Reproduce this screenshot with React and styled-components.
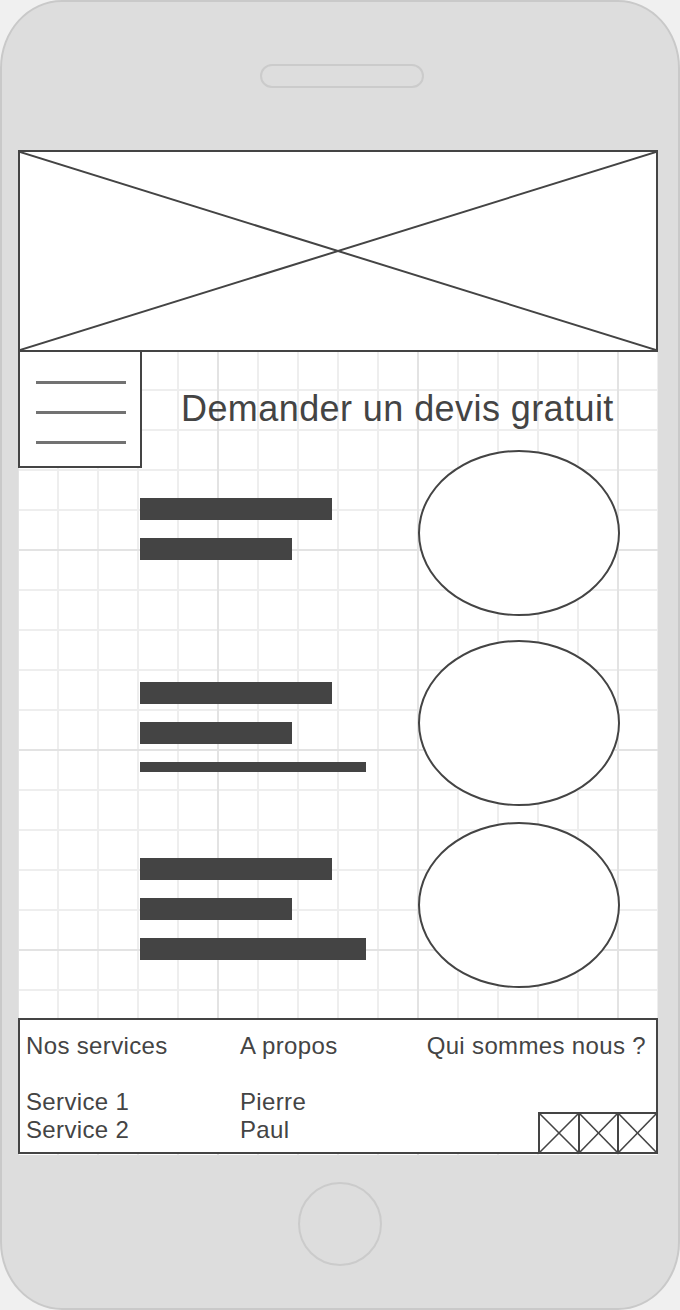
import React from 'react';
import styled, { createGlobalStyle } from 'styled-components';

const Global = createGlobalStyle`
  html, body { margin: 0; padding: 0; background: #f0f0f0; }
  body { font-family: "Liberation Sans", Arial, sans-serif; }
  * { box-sizing: border-box; }
`;

const Phone = styled.div`
  width: 680px;
  height: 1310px;
  border: 2px solid #c9c9c9;
  border-radius: 62px / 68px;
  background: #dddddd;
  display: flex;
  flex-direction: column;
  align-items: flex-start;
`;

const Speaker = styled.div`
  margin: 62px 0 0 258px;
  width: 164px;
  height: 24px;
  border: 2px solid #cbcbcb;
  border-radius: 12px;
`;

const Screen = styled.div`
  margin: 62px 0 0 16px;
  width: 640px;
  height: 1005px;
  background-color: #fff;
  background-image:
    linear-gradient(90deg, #e3e3e3 2px, transparent 2px),
    linear-gradient(#e3e3e3 2px, transparent 2px),
    linear-gradient(90deg, #eeeeee 2px, transparent 2px),
    linear-gradient(#eeeeee 2px, transparent 2px);
  background-size: 200px 200px, 200px 200px, 40px 40px, 40px 40px;
  background-position: -1px -1px;
  display: flex;
  flex-direction: column;
`;

const Hero = styled.div`
  height: 202px;
  border: 2px solid #444;
  background: #fff;
  svg { display: block; width: 100%; height: 100%; }
`;

const TopRow = styled.div`
  display: flex;
  align-items: center;
  height: 118px;
  margin-top: -2px;
  margin-bottom: -18px;
`;

const MenuBox = styled.div`
  width: 124px;
  height: 118px;
  border: 2px solid #444;
  background: #fff;
  display: flex;
  flex-direction: column;
  padding: 29px 0 0 16px;
  gap: 27px;
`;

const MenuLine = styled.div`
  width: 90px;
  height: 3px;
  background: #727272;
`;

const Title = styled.h1`
  margin: 0 0 0 39px;
  font-size: 36px;
  font-weight: 400;
  letter-spacing: 0.42px;
  color: #444;
  line-height: 1.15;
  white-space: nowrap;
`;

const Row = styled.div`
  display: flex;
  justify-content: space-between;
  align-items: flex-start;
  height: 166px;
  margin-top: ${p => p.$gap}px;
  padding: 0 38px 0 122px;
`;

const Bars = styled.div`
  display: flex;
  flex-direction: column;
  gap: 18px;
  padding-top: ${p => p.$offset}px;
`;

const Bar = styled.div`
  width: ${p => p.$w}px;
  height: ${p => p.$h || 22}px;
  background: #444;
`;

const Ellipse = styled.div`
  width: 202px;
  height: 166px;
  border: 2px solid #444;
  border-radius: 50%;
  background: #fff;
`;

const Footer = styled.footer`
  margin-top: 30px;
  height: 136px;
  border: 2px solid #444;
  background: #fff;
  display: grid;
  grid-template-columns: 214px 1fr auto;
  padding: 12px 0 0 6px;
  font-size: 24px;
  letter-spacing: 0.35px;
  line-height: 28px;
  color: #444;
`;

const Col = styled.div`
  display: flex;
  flex-direction: column;
`;

const Item = styled.div`
  white-space: nowrap;
  min-height: 28px;
`;

const RightCol = styled.div`
  display: flex;
  flex-direction: column;
  align-items: flex-end;
  justify-content: space-between;
  margin: 0 -2px -2px 0;
`;

const RightText = styled.div`
  padding-right: 12px;
  white-space: nowrap;
`;

const Icons = styled.svg`
  display: block;
`;

const HomeButton = styled.div`
  margin: 27px 0 0 296px;
  width: 84px;
  height: 84px;
  border: 2px solid #cbcbcb;
  border-radius: 50%;
`;

function IconStrip() {
  const xs = [1, 41, 80, 119];
  return (
    <Icons width="120" height="42" viewBox="0 0 120 42">
      <rect x="1" y="1" width="118" height="40" fill="#fff" stroke="#444" strokeWidth="2" />
      <line x1="41" y1="0" x2="41" y2="42" stroke="#444" strokeWidth="2" />
      <line x1="80" y1="0" x2="80" y2="42" stroke="#444" strokeWidth="2" />
      {[0, 1, 2].map(i => (
        <g key={i} stroke="#444" strokeWidth="1.6">
          <line x1={xs[i]} y1="1" x2={xs[i + 1]} y2="41" />
          <line x1={xs[i + 1]} y1="1" x2={xs[i]} y2="41" />
        </g>
      ))}
    </Icons>
  );
}

export default function App() {
  return (
    <>
      <Global />
      <Phone>
        <Speaker />
        <Screen>
          <Hero>
            <svg viewBox="0 0 636 198" preserveAspectRatio="none">
              <line x1="0" y1="0" x2="636" y2="198" stroke="#444" strokeWidth="2" vectorEffect="non-scaling-stroke" />
              <line x1="636" y1="0" x2="0" y2="198" stroke="#444" strokeWidth="2" vectorEffect="non-scaling-stroke" />
            </svg>
          </Hero>
          <TopRow>
            <MenuBox>
              <MenuLine />
              <MenuLine />
              <MenuLine />
            </MenuBox>
            <Title>Demander un devis gratuit</Title>
          </TopRow>
          <Row $gap={0}>
            <Bars $offset={48}>
              <Bar $w={192} />
              <Bar $w={152} />
            </Bars>
            <Ellipse />
          </Row>
          <Row $gap={24}>
            <Bars $offset={42}>
              <Bar $w={192} />
              <Bar $w={152} />
              <Bar $w={226} $h={10} />
            </Bars>
            <Ellipse />
          </Row>
          <Row $gap={16}>
            <Bars $offset={36}>
              <Bar $w={192} />
              <Bar $w={152} />
              <Bar $w={226} />
            </Bars>
            <Ellipse />
          </Row>
          <Footer>
            <Col>
              <Item>Nos services</Item>
              <Item />
              <Item>Service 1</Item>
              <Item>Service 2</Item>
            </Col>
            <Col>
              <Item>A propos</Item>
              <Item />
              <Item>Pierre</Item>
              <Item>Paul</Item>
            </Col>
            <RightCol>
              <RightText>Qui sommes nous ?</RightText>
              <IconStrip />
            </RightCol>
          </Footer>
        </Screen>
        <HomeButton />
      </Phone>
    </>
  );
}
